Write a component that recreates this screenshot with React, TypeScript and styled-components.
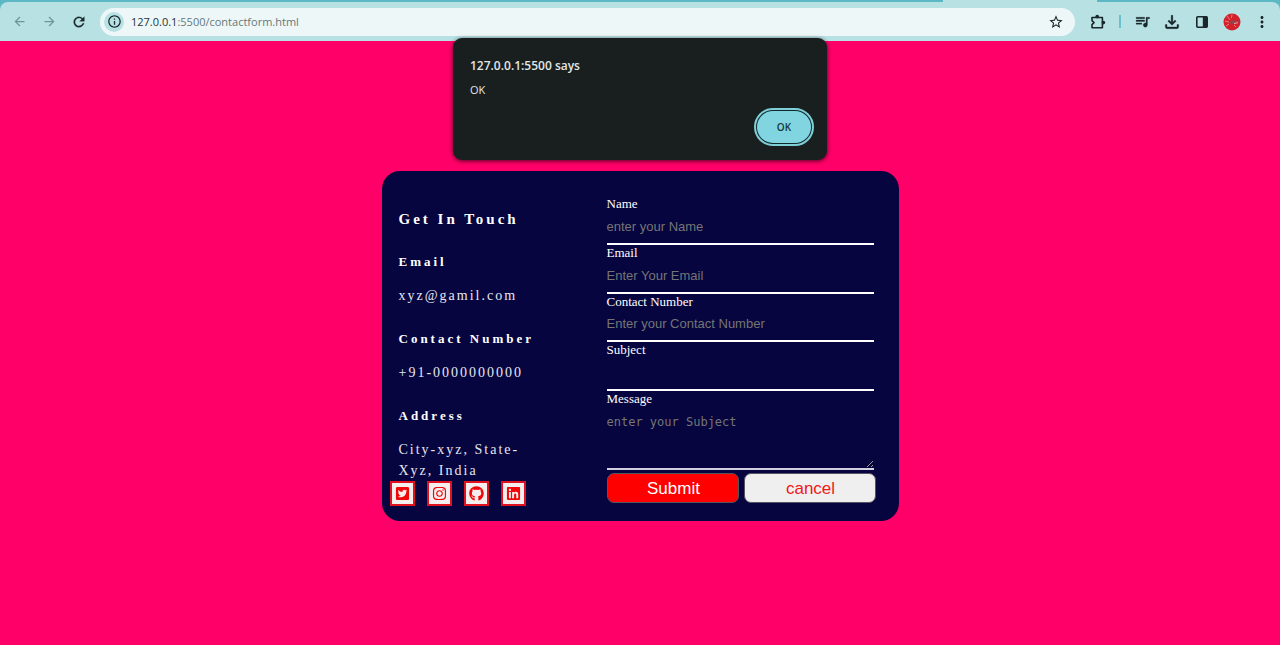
import React from "react";
import styled, { createGlobalStyle } from "styled-components";
import {
  MdArrowBack,
  MdArrowForward,
  MdRefresh,
  MdInfoOutline,
  MdStarBorder,
  MdQueueMusic,
  MdOutlineFileDownload,
  MdMoreVert,
} from "react-icons/md";
import { FaTwitterSquare, FaInstagram, FaGithub, FaLinkedin } from "react-icons/fa";

const ui = `"Open Sans", "Noto Sans", sans-serif`;
const serif = `"Liberation Serif", "Times New Roman", serif`;
const sans = `"Liberation Sans", Arial, sans-serif`;

const GlobalStyle = createGlobalStyle`
  *, *::before, *::after { box-sizing: border-box; }
  body { margin: 0; background: #ff0068; font-family: ${serif}; }
  h2, h3, p { margin: 0; }
`;

const TabStrip = styled.div`
  display: flex;
  justify-content: flex-end;
  height: 2px;
  background: #5bb8c4;
`;

const ActiveTab = styled.div`
  width: 154px;
  margin-right: 183px;
  background: #b8e1e4;
`;

const ToolbarBack = styled.div`
  background: #5bb8c4;
`;

const Toolbar = styled.header`
  display: flex;
  align-items: center;
  height: 39px;
  padding: 0 3px 0 9px;
  background: #b8e1e4;
  border-radius: 8px 8px 0 0;
`;

const ToolButton = styled.button<{ $dim?: boolean; $bold?: boolean; $width?: number }>`
  display: flex;
  flex: none;
  align-items: center;
  justify-content: center;
  width: ${(p) => p.$width ?? 30}px;
  height: 28px;
  padding: 0;
  border: 0;
  background: none;
  color: ${(p) => (p.$dim ? "#6f9599" : "#18272a")};

  path:not([fill="none"]) {
    stroke: ${(p) => (p.$bold ? "currentColor" : "none")};
    stroke-width: 0.4;
  }
`;

const AddressBar = styled.div`
  display: flex;
  flex: 1;
  align-items: center;
  height: 28px;
  margin: 0 8px 0 11px;
  padding: 0 4px;
  border-radius: 14px;
  background: #edf7f8;
`;

const SiteInfo = styled.button`
  display: flex;
  flex: none;
  align-items: center;
  justify-content: center;
  width: 20px;
  height: 20px;
  padding: 0;
  border: 0;
  border-radius: 50%;
  background: #b8e1e4;
  color: #18272a;
`;

const Url = styled.div`
  flex: 1;
  margin-left: 7px;
  font: 11px/16px ${ui};
  color: #66777a;

  span {
    color: #263336;
  }
`;

const Divider = styled.div`
  width: 2px;
  height: 13px;
  margin: 0 6px;
  background: #6cc0c9;
`;

const Page = styled.main`
  display: flex;
  justify-content: center;
  padding: 130px 16px 24px;
`;

const Dialog = styled.div`
  position: absolute;
  top: 38px;
  left: 50%;
  display: flex;
  flex-direction: column;
  width: 374px;
  height: 122px;
  padding: 18px 16px 16px 17px;
  transform: translateX(-50%);
  border-radius: 9px;
  background: #191e1e;
  box-shadow: 0 1px 4px rgba(0, 0, 0, 0.7);
  color: #e2e6e6;
  font-family: ${ui};
`;

const DialogTitle = styled.h2`
  font-size: 12px;
  line-height: 20px;
  font-weight: 600;
`;

const DialogText = styled.p`
  margin-top: 6px;
  font-size: 11px;
  line-height: 16px;
`;

const DialogButton = styled.button`
  align-self: flex-end;
  width: 54px;
  height: 32px;
  margin-top: 13px;
  border: 0;
  border-radius: 16px;
  outline: 2px solid #7fcfd9;
  outline-offset: 1px;
  box-shadow: 0 0 0 2px #12292c;
  background: #80d5e0;
  color: #12383d;
  font: 600 10px/14px ${ui};
`;

const Card = styled.section`
  display: grid;
  grid-template-columns: 208px 1fr;
  width: 517px;
  min-height: 350px;
  padding: 25px 23px 14px 17px;
  border-radius: 18px;
  background: #06053f;
  color: #fff;
`;

const Contact = styled.div`
  padding: 13px 60px 0 0;
  letter-spacing: 3px;
`;

const ContactTitle = styled.h2`
  font-size: 15px;
  line-height: 20px;
`;

const ContactHeading = styled.h3`
  margin-top: 24px;
  font-size: 13px;
  line-height: 18px;
`;

const ContactText = styled.p`
  margin-top: 14px;
  font-size: 14px;
  line-height: 21px;
  letter-spacing: 2px;
  color: #e6e6f0;
`;

const Socials = styled.div`
  display: flex;
  gap: 12px;
  margin-left: -9px;
`;

const SocialLink = styled.a`
  display: flex;
  flex: none;
  align-items: center;
  justify-content: center;
  width: 25px;
  height: 25px;
  border: 2px solid #e0121f;
  background: #f5eeee;
  color: #f00808;
`;

const Form = styled.form`
  display: flex;
  flex-direction: column;
`;

const Fields = styled.div`
  display: grid;
  grid-template-rows: repeat(4, 1fr);
  width: 267px;
  height: 195px;
`;

const Field = styled.div`
  display: flex;
  flex-direction: column;
  width: 267px;
`;

const Label = styled.label`
  font-size: 13px;
  line-height: 15px;
`;

const Input = styled.input`
  flex: 1;
  min-height: 0;
  width: 100%;
  padding: 0;
  border: 0;
  border-bottom: 2px solid #fff;
  outline: 0;
  background: none;
  color: #fff;
  font: 13px/18px ${sans};

  &::placeholder {
    color: #757575;
  }
`;

const TextArea = styled.textarea`
  display: block;
  width: 100%;
  height: 64px;
  padding: 8px 0;
  border: 0;
  border-bottom: 2px solid #d0d0e0;
  outline: 0;
  background: none;
  color: #fff;
  font: 12px/16px "DejaVu Sans Mono", monospace;
  resize: vertical;

  &::placeholder {
    color: #757575;
  }
`;

const Actions = styled.div`
  display: flex;
  gap: 5px;
  margin-top: 3px;
`;

const ActionButton = styled.button<{ $primary?: boolean }>`
  flex: 1;
  height: 30px;
  padding: 2px 0 0 2px;
  border: 1px solid #55555f;
  border-radius: 7px;
  background: ${(p) => (p.$primary ? "#ff0000" : "#efefef")};
  color: ${(p) => (p.$primary ? "#ffffff" : "#f01818")};
  font: 17px/20px ${sans};
`;

const fields = [
  { id: "name", label: "Name", type: "text", placeholder: "enter your Name" },
  { id: "email", label: "Email", type: "email", placeholder: "Enter Your Email" },
  { id: "phone", label: "Contact Number", type: "tel", placeholder: "Enter your Contact Number" },
  { id: "subject", label: "Subject", type: "text", placeholder: "" },
];

const socials = [
  { name: "Twitter", Icon: FaTwitterSquare },
  { name: "Instagram", Icon: FaInstagram },
  { name: "GitHub", Icon: FaGithub },
  { name: "LinkedIn", Icon: FaLinkedin },
];

const PuzzleIcon = () => (
  <svg width="16" height="16" viewBox="0 0 16 16">
    <g fill="none" stroke="currentColor" strokeWidth="1.6" strokeLinejoin="round">
      <polygon points="2,3.5 12.4,3.5 12.4,13.8 2,13.8 2,10.6 4,8.6 2,6.6" />
    </g>
    <circle cx="7.2" cy="2.6" r="1.8" fill="currentColor" />
    <circle cx="13.4" cy="8.6" r="1.8" fill="currentColor" />
  </svg>
);

const SidePanelIcon = () => (
  <svg width="14" height="14" viewBox="0 0 14 14">
    <rect x="1.8" y="1.8" width="10.4" height="10.4" rx="1" fill="none" stroke="currentColor" strokeWidth="1.6" />
    <rect x="7.8" y="1.5" width="4.4" height="11" fill="currentColor" />
  </svg>
);

const Avatar = () => (
  <svg width="18" height="18" viewBox="0 0 18 18">
    <circle cx="9" cy="9" r="8.5" fill="#d3202a" />
    <g stroke="#f0969a" strokeWidth="0.8">
      <line x1="4" y1="3" x2="7" y2="7" />
      <line x1="9" y1="1.5" x2="8.5" y2="5" />
      <line x1="2" y1="8" x2="6" y2="9" />
      <line x1="3" y1="13" x2="6" y2="11" />
      <line x1="13" y1="14" x2="11" y2="12" />
    </g>
    <polyline points="7,10 9,8 9.5,10 11,8 12,10 16,8" fill="none" stroke="#8a4a50" strokeWidth="1.2" />
    <line x1="11" y1="10.5" x2="15" y2="9.7" stroke="#f7c7c7" strokeWidth="0.8" />
  </svg>
);

export default function App() {
  return (
    <>
      <GlobalStyle />
      <TabStrip>
        <ActiveTab />
      </TabStrip>
      <ToolbarBack>
        <Toolbar>
          <ToolButton $dim $width={20} aria-label="Back"><MdArrowBack size={15} /></ToolButton>
          <ToolButton $dim $width={40} aria-label="Forward"><MdArrowForward size={15} /></ToolButton>
          <ToolButton $bold $width={20} aria-label="Reload"><MdRefresh size={16} /></ToolButton>
          <AddressBar>
            <SiteInfo aria-label="Site information"><MdInfoOutline size={15} /></SiteInfo>
            <Url><span>127.0.0.1</span>:5500/contactform.html</Url>
            <ToolButton aria-label="Bookmark"><MdStarBorder size={16} /></ToolButton>
          </AddressBar>
          <ToolButton aria-label="Extensions"><PuzzleIcon /></ToolButton>
          <Divider />
          <ToolButton $bold aria-label="Media"><MdQueueMusic size={17} /></ToolButton>
          <ToolButton $bold aria-label="Downloads"><MdOutlineFileDownload size={20} /></ToolButton>
          <ToolButton aria-label="Side panel"><SidePanelIcon /></ToolButton>
          <ToolButton aria-label="Profile"><Avatar /></ToolButton>
          <ToolButton aria-label="Menu"><MdMoreVert size={18} /></ToolButton>
        </Toolbar>
      </ToolbarBack>

      <Page>
        <Card>
          <Contact>
            <ContactTitle>Get In Touch</ContactTitle>
            <ContactHeading>Email</ContactHeading>
            <ContactText>xyz@gamil.com</ContactText>
            <ContactHeading>Contact Number</ContactHeading>
            <ContactText>+91-0000000000</ContactText>
            <ContactHeading>Address</ContactHeading>
            <ContactText>City-xyz, State-Xyz, India</ContactText>
            <Socials>
              {socials.map(({ name, Icon }) => (
                <SocialLink key={name} href="#" aria-label={name}><Icon size={15} /></SocialLink>
              ))}
            </Socials>
          </Contact>
          <Form onSubmit={(e) => e.preventDefault()}>
            <Fields>
              {fields.map((f) => (
                <Field key={f.id}>
                  <Label htmlFor={f.id}>{f.label}</Label>
                  <Input id={f.id} type={f.type} placeholder={f.placeholder} />
                </Field>
              ))}
            </Fields>
            <Field>
              <Label htmlFor="message">Message</Label>
              <TextArea id="message" placeholder="enter your Subject" />
            </Field>
            <Actions>
              <ActionButton $primary type="submit">Submit</ActionButton>
              <ActionButton type="reset">cancel</ActionButton>
            </Actions>
          </Form>
        </Card>
      </Page>

      <Dialog role="dialog" aria-labelledby="dialog-title">
        <DialogTitle id="dialog-title">127.0.0.1:5500 says</DialogTitle>
        <DialogText>OK</DialogText>
        <DialogButton>OK</DialogButton>
      </Dialog>
    </>
  );
}
